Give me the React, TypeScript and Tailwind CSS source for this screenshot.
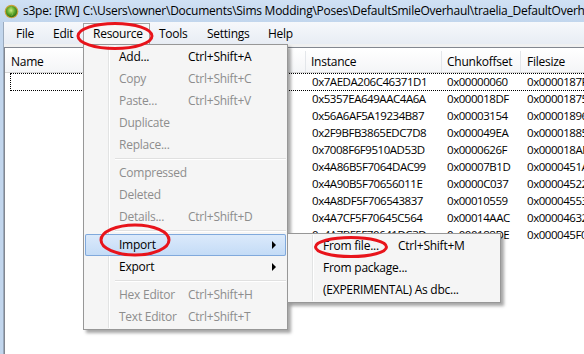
const rows = [
  ["0x7AEDA206C46371D1", "0x00000060", "0x0000187F"],
  ["0x5357EA649AAC4A6A", "0x000018DF", "0x00001875"],
  ["0x56A6AF5A19234B87", "0x00003154", "0x00001896"],
  ["0x2F9BFB3865EDC7D8", "0x000049EA", "0x00001885"],
  ["0x7008F6F9510AD53D", "0x0000626F", "0x000018AF"],
  ["0x4A86B5F7064DAC99", "0x00007B1D", "0x0000451A"],
  ["0x4A90B5F70656011E", "0x0000C037", "0x00004522"],
  ["0x4A8DF5F706543837", "0x00010559", "0x00004553"],
  ["0x4A7CF5F70645C564", "0x00014AAC", "0x00004632"],
  ["0x4A7BF5F70641DC3D", "0x000188DE", "0x000045F0"],
];

type RowProps = {
  label: string;
  shortcut?: string;
  disabled?: boolean;
  active?: boolean;
  sub?: boolean;
  textW: string;
};

function MenuRow({ label, shortcut, disabled, active, sub, textW }: RowProps) {
  return (
    <div
      className={`flex h-[22px] items-center ${
        active
          ? "bg-gradient-to-b from-[#dceafb] to-[#c3dbf6] shadow-[inset_0_0_0_1px_#80a9dc] rounded-[2px]"
          : ""
      } ${disabled ? "text-[#8d8d8d]" : "text-black"}`}
    >
      <div
        className={`h-full w-[24px] shrink-0 border-r ${
          active ? "border-transparent" : "border-[#e2e3e3] shadow-[1px_0_0_#ffffff]"
        }`}
      />
      <div className={`${textW} shrink-0 pl-[10px] whitespace-nowrap`}>{label}</div>
      <div className="whitespace-nowrap">{shortcut}</div>
      {sub && (
        <div className="ml-auto mr-[10px] h-0 w-0 border-y-[4px] border-l-[4px] border-y-transparent border-l-black" />
      )}
    </div>
  );
}

function Sep() {
  return (
    <div className="flex h-[6px] items-center">
      <div className="h-full w-[24px] shrink-0 border-r border-[#e2e3e3] shadow-[1px_0_0_#ffffff]" />
      <div className="ml-[6px] flex-1 border-t border-b border-t-[#e0e0e0] border-b-white" />
    </div>
  );
}

function AppIcon() {
  return (
    <svg className="shrink-0" width="15" height="15" viewBox="0 0 16 16">
      <defs>
        <radialGradient id="g" cx="0.45" cy="0.4" r="0.6">
          <stop offset="0" stopColor="#c8ec7a" />
          <stop offset="0.6" stopColor="#5aa62a" />
          <stop offset="1" stopColor="#2f6e14" />
        </radialGradient>
      </defs>
      <circle cx="8" cy="8" r="7.3" fill="#c9a23c" />
      <circle cx="8" cy="8" r="6" fill="url(#g)" />
      <path d="M8 2.5 C5.5 5 10.5 7 8 13.5 C11 10 6 7 8 2.5Z" fill="#f4f0b0" opacity="0.85" />
    </svg>
  );
}

export default function App() {
  const menuItems: [string, string][] = [
    ["File", "w-[37px]"],
    ["Edit", "w-[39px]"],
    ["Resource", "w-[67px]"],
    ["Tools", "w-[48px]"],
    ["Settings", "w-[61px]"],
    ["Help", "w-[42px]"],
  ];

  return (
    <div className="relative h-[354px] w-[584px] overflow-hidden bg-white font-['Open_Sans',sans-serif] text-[12px] tracking-[-0.25px] text-black">
      {/* title bar */}
      <div className="flex h-[22px] items-center gap-[4px] overflow-hidden bg-gradient-to-b from-[#d0e1f4] to-[#c2d6ed] pl-[4px]">
        <AppIcon />
        <div className="min-w-0 whitespace-nowrap">
          s3pe: [RW] C:\Users\owner\Documents\Sims Modding\Poses\DefaultSmileOverhaul\traelia_DefaultOverhaul
        </div>
      </div>

      <div className="flex h-[332px]">
        {/* window frame */}
        <div className="w-[4px] shrink-0 bg-[#c2d6ed] border-r border-[#9aaabd]" />

        <div className="flex min-w-0 flex-1 flex-col bg-[#f0f0f0]">
          {/* menu bar */}
          <div className="flex h-[22px] items-end bg-gradient-to-b from-[#f6f8fb] to-[#e8edf4] pl-[3px]">
            {menuItems.map(([m, w]) => (
              <div
                key={m}
                className={`${w} flex h-[21px] items-center pl-[9px] ${
                  m === "Resource" ? "border-x border-t border-[#a3a3a3] bg-[#f7f7f7] pl-[8px]" : ""
                }`}
              >
                {m}
              </div>
            ))}
          </div>

          {/* list view */}
          <div className="mt-[3px] flex-1 border-t border-l border-[#828790] bg-white">
            <div className="flex h-[25px] items-center border-b border-[#d5d5d5] bg-gradient-to-b from-white to-[#f4f5f7] pt-[3px]">
              <div className="h-full w-[301px] shrink-0 border-r border-[#e3e6ea] pl-[6px] leading-[22px]">Name</div>
              <div className="h-full w-[136px] shrink-0 border-r border-[#e3e6ea] pl-[5px] leading-[22px]">Instance</div>
              <div className="h-full w-[79px] shrink-0 border-r border-[#e3e6ea] pl-[5px] leading-[22px]">Chunkoffset</div>
              <div className="h-full flex-1 pl-[6px] leading-[22px]">Filesize</div>
            </div>
            {rows.map((r, i) => (
              <div key={r[0]} className="relative flex h-[17px] items-center tracking-[-0.45px] text-[11.5px]">
                {i === 0 && (
                  <div className="absolute left-[5px] right-[-4px] top-0 h-[18px] border border-dotted border-black" />
                )}
                <div className="w-[301px] shrink-0" />
                <div className="w-[136px] shrink-0 pl-[6px] whitespace-nowrap">{r[0]}</div>
                <div className="w-[79px] shrink-0 pl-[5px] whitespace-nowrap">{r[1]}</div>
                <div className="flex-1 pl-[6px] whitespace-nowrap">{r[2]}</div>
              </div>
            ))}
          </div>
        </div>
      </div>

      {/* Resource menu */}
      <div className="absolute left-[83px] top-[44px] w-[205px] border border-[#979797] bg-[#f5f5f5] p-[1px] shadow-[3px_3px_3px_rgba(0,0,0,0.35)]">
        <MenuRow label="Add..." shortcut="Ctrl+Shift+A" textW="w-[79px]" />
        <MenuRow label="Copy" shortcut="Ctrl+Shift+C" disabled textW="w-[79px]" />
        <MenuRow label="Paste..." shortcut="Ctrl+Shift+V" disabled textW="w-[79px]" />
        <MenuRow label="Duplicate" disabled textW="w-[79px]" />
        <MenuRow label="Replace..." disabled textW="w-[79px]" />
        <Sep />
        <MenuRow label="Compressed" disabled textW="w-[79px]" />
        <MenuRow label="Deleted" disabled textW="w-[79px]" />
        <MenuRow label="Details..." shortcut="Ctrl+Shift+D" disabled textW="w-[79px]" />
        <Sep />
        <MenuRow label="Import" active sub textW="w-[79px]" />
        <MenuRow label="Export" sub textW="w-[79px]" />
        <Sep />
        <MenuRow label="Hex Editor" shortcut="Ctrl+Shift+H" disabled textW="w-[79px]" />
        <MenuRow label="Text Editor" shortcut="Ctrl+Shift+T" disabled textW="w-[79px]" />
      </div>

      {/* Import submenu */}
      <div className="absolute left-[287px] top-[233px] w-[214px] border border-[#979797] bg-[#f5f5f5] p-[1px] shadow-[3px_3px_3px_rgba(0,0,0,0.35)]">
        <MenuRow label="From file..." shortcut="Ctrl+Shift+M" textW="w-[85px]" />
        <MenuRow label="From package..." textW="w-[85px]" />
        <MenuRow label="(EXPERIMENTAL) As dbc..." textW="w-[85px]" />
      </div>

      {/* red annotation circles */}
      <svg className="pointer-events-none absolute inset-0" width="584" height="354">
        <ellipse cx="115" cy="36" rx="37" ry="12.5" fill="none" stroke="#e8141b" strokeWidth="3" />
        <ellipse cx="135" cy="240" rx="34" ry="15" fill="none" stroke="#e8141b" strokeWidth="3" />
        <ellipse cx="351" cy="247" rx="35.5" ry="9.5" fill="none" stroke="#e8141b" strokeWidth="3" />
      </svg>
    </div>
  );
}
